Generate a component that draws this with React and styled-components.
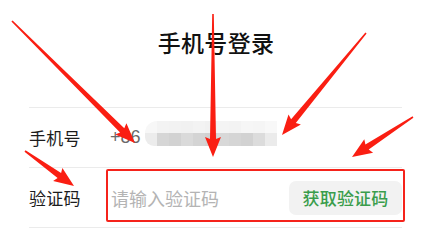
import React from "react";
import styled, { createGlobalStyle } from "styled-components";

const Global = createGlobalStyle`
  html, body { margin: 0; padding: 0; background: #ffffff; }
  body { font-family: "Noto Sans CJK SC", "Noto Sans", sans-serif; }
`;

const Page = styled.div`
  position: relative;
  width: 432px;
  height: 242px;
  overflow: hidden;
  background: #fff;
`;

const Header = styled.div`
  height: 107px;
  box-sizing: border-box;
  padding-top: 24px;
  display: flex;
  justify-content: center;
  align-items: flex-start;
`;

const Title = styled.h1`
  margin: 0;
  font-size: 23px;
  line-height: 36px;
  font-weight: 500;
  color: #111;
  letter-spacing: 0.3px;
`;

const Form = styled.div`
  margin: 0 30px 0 29px;
  border-bottom: 1px solid #ebebeb;
`;

const Row = styled.div`
  display: flex;
  align-items: center;
  height: 59px;
  border-top: 1px solid #ebebeb;
`;

const Label = styled.span`
  width: 81px;
  flex: none;
  font-size: 17px;
  color: #1c1c1c;
  letter-spacing: 0.3px;
`;

const Prefix = styled.span`
  font-family: "Liberation Sans", "Noto Sans", sans-serif;
  font-size: 18px;
  color: #6a6a6a;
  margin-right: 4px;
`;

const Mosaic = styled.div`
  display: grid;
  grid-template-columns: repeat(11, 12px);
  grid-template-rows: 12px 13px;
  border-radius: 12px 0 0 9px;
  overflow: hidden;
  margin-top: -8px;
`;

const Cell = styled.span`
  background: ${(p) => p.$c};
`;

const Field = styled.div`
  position: relative;
  flex: 1;
  display: flex;
  align-items: center;
  justify-content: space-between;
  height: 100%;
`;

const Placeholder = styled.span`
  font-size: 18px;
  color: #b4b4b4;
  margin-left: 1px;
`;

const CodeButton = styled.button`
  all: unset;
  box-sizing: border-box;
  width: 113px;
  height: 34px;
  border-radius: 7px;
  background: #f2f2f2;
  color: #3a9d4c;
  font-family: "Noto Sans CJK SC", sans-serif;
  font-size: 17px;
  font-weight: 500;
  display: flex;
  align-items: center;
  justify-content: center;
  letter-spacing: 0.2px;
`;

const Highlight = styled.span`
  position: absolute;
  left: -4px;
  right: -3px;
  top: 1px;
  bottom: 5px;
  border: 2px solid #f5231b;
  border-radius: 2px;
  pointer-events: none;
`;

const Overlay = styled.svg`
  position: absolute;
  inset: 0;
  pointer-events: none;
`;

const top = ["#f7f7f7", "#f3f3f3", "#f2f2f2", "#f1f1f1", "#f3f3f3", "#f1f1f1", "#f4f4f4", "#f3f3f3", "#f6f6f6", "#f5f5f5", "#f8f8f8"];
const bottom = ["#ececec", "#d6d6d6", "#d2d2d2", "#dadada", "#d4d4d4", "#d1d1d1", "#d8d8d8", "#d5d5d5", "#d2d2d2", "#dcdcdc", "#ebebeb"];

const arrows = [
  { s: [12, 21], t: [135, 143] },
  { s: [213, 14], t: [213, 157] },
  { s: [366, 33], t: [282, 135] },
  { s: [413, 117], t: [352, 157] },
  { s: [25, 151], t: [74, 186] },
];

function arrowPoints({ s, t }) {
  const dx = t[0] - s[0];
  const dy = t[1] - s[1];
  const L = Math.hypot(dx, dy);
  const ux = dx / L, uy = dy / L;
  const nx = -uy, ny = ux;
  const hl = 18, hh = 8, w1 = 3, w0 = 0.8;
  const bx = t[0] - ux * hl, by = t[1] - uy * hl;
  const pts = [
    [s[0] + nx * w0, s[1] + ny * w0],
    [bx + nx * w1, by + ny * w1],
    [bx + nx * hh - ux * 2, by + ny * hh - uy * 2],
    [t[0], t[1]],
    [bx - nx * hh - ux * 2, by - ny * hh - uy * 2],
    [bx - nx * w1, by - ny * w1],
    [s[0] - nx * w0, s[1] - ny * w0],
  ];
  return pts.map((p) => p.map((v) => v.toFixed(1)).join(",")).join(" ");
}

export default function App() {
  return (
    <Page>
      <Global />
      <Header>
        <Title>手机号登录</Title>
      </Header>
      <Form>
        <Row>
          <Label>手机号</Label>
          <Prefix>+86</Prefix>
          <Mosaic>
            {top.map((c, i) => (
              <Cell key={"t" + i} $c={c} />
            ))}
            {bottom.map((c, i) => (
              <Cell key={"b" + i} $c={c} />
            ))}
          </Mosaic>
        </Row>
        <Row>
          <Label>验证码</Label>
          <Field>
            <Placeholder>请输入验证码</Placeholder>
            <CodeButton>获取验证码</CodeButton>
            <Highlight />
          </Field>
        </Row>
      </Form>
      <Overlay width="432" height="242" viewBox="0 0 432 242">
        {arrows.map((a, i) => (
          <polygon key={i} points={arrowPoints(a)} fill="#fa1e12" />
        ))}
      </Overlay>
    </Page>
  );
}
